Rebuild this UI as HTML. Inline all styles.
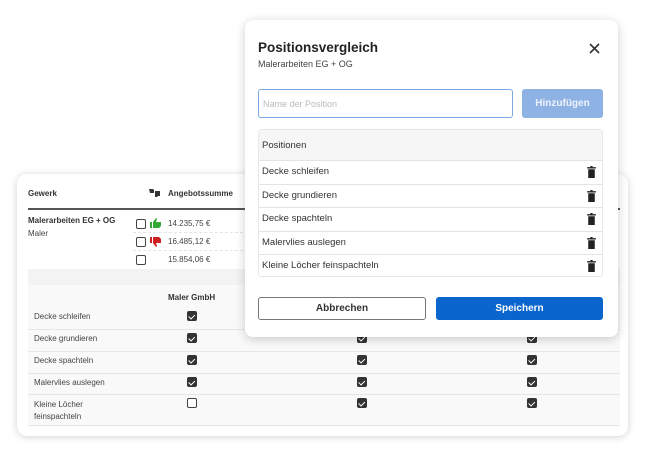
<!DOCTYPE html>
<html><head><meta charset="utf-8"><style>
*{box-sizing:border-box;margin:0;padding:0}
body{width:650px;height:450px;background:#fff;position:relative;overflow:hidden;font-family:"Liberation Sans",sans-serif;color:#333}
.abs{position:absolute}
.card{left:17px;top:174px;width:611px;height:262px;background:#fff;border-radius:10px;box-shadow:0 1px 8px rgba(0,0,0,.18)}
.t{font-size:8px;color:#444;position:absolute}
.b{font-weight:bold;color:#333}
.cb{position:absolute;width:10px;height:10px;border:1.3px solid #444;border-radius:2px;background:#fff}
.ck{position:absolute;width:10px;height:10px;border-radius:2px;background:#333}
.ck:after{content:"";position:absolute;left:3px;top:1.5px;width:2.5px;height:4.5px;border:solid #fff;border-width:0 1.3px 1.3px 0;transform:rotate(45deg)}
.modal{left:245px;top:20px;width:373px;height:317px;background:#fff;border-radius:8px;box-shadow:0 2px 10px rgba(0,0,0,.2)}
.row{position:absolute;left:258px;width:345px;height:23.5px;border-top:1px solid #e4e4e4;font-size:9.5px;color:#333;padding:5px 4px}
.trash{position:absolute;right:7px;top:5px;width:9px;height:12px}
</style></head><body>
<div class="abs card"></div>
<div class="t b" style="left:28px;top:189px">Gewerk</div>
<div class="t b" style="left:168px;top:189px">Angebotssumme</div>
<svg class="abs" style="left:149px;top:188px" width="12" height="9" viewBox="0 0 12 9"><path d="M0 1h4l1 1v3H1z M6 3h5v5H9L8 9H6z" fill="#333"/></svg>
<div class="abs" style="left:28px;top:208px;width:592px;height:1.5px;background:#555"></div>
<div class="t b" style="left:28px;top:216px">Malerarbeiten EG + OG</div>
<div class="t" style="left:28px;top:229px">Maler</div>
<div class="cb" style="left:136px;top:219px"></div>
<div class="cb" style="left:136px;top:237px"></div>
<div class="cb" style="left:136px;top:255px"></div>
<svg class="abs" style="left:150px;top:218px" width="11" height="10" viewBox="0 0 11 10"><path d="M0 4h2v6H0z M3 4l3-4 1 1-1 3h5v4l-2 2H3z" fill="#3a3"/></svg>
<svg class="abs" style="left:150px;top:237px" width="11" height="10" viewBox="0 0 11 10"><path d="M0 0h2v6H0z M3 6l3 4 1-1-1-3h5V2L9 0H3z" fill="#c22"/></svg>
<div class="t" style="left:168px;top:219px">14.235,75 €</div>
<div class="t" style="left:168px;top:237px">16.485,12 €</div>
<div class="t" style="left:168px;top:255px">15.854,06 €</div>
<div class="abs" style="left:133px;top:232px;width:110px;border-top:1px dashed #e4e4e4"></div>
<div class="abs" style="left:133px;top:250px;width:110px;border-top:1px dashed #e4e4e4"></div>
<div class="abs" style="left:28px;top:269px;width:592px;height:16px;background:#f3f3f3"></div>
<div class="abs" style="left:28px;top:285px;width:592px;height:141px;background:#f9f9f9;border-bottom:1px solid #e6e6e6"></div>
<div class="t b" style="left:168px;top:293px">Maler GmbH</div>
<div class="t" style="left:34px;top:312px">Decke schleifen</div>
<div class="t" style="left:34px;top:334px">Decke grundieren</div>
<div class="t" style="left:34px;top:356px">Decke spachteln</div>
<div class="t" style="left:34px;top:378px">Malervlies auslegen</div>
<div class="t" style="left:34px;top:399px;line-height:12px">Kleine Löcher<br>feinspachteln</div>
<div class="abs" style="left:28px;top:329px;width:592px;border-top:1px solid #e6e6e6"></div>
<div class="abs" style="left:28px;top:351px;width:592px;border-top:1px solid #e6e6e6"></div>
<div class="abs" style="left:28px;top:373px;width:592px;border-top:1px solid #e6e6e6"></div>
<div class="abs" style="left:28px;top:394px;width:592px;border-top:1px solid #e6e6e6"></div>
<div class="ck" style="left:187px;top:311px"></div>
<div class="ck" style="left:187px;top:333px"></div>
<div class="ck" style="left:187px;top:355px"></div>
<div class="ck" style="left:187px;top:377px"></div>
<div class="cb" style="left:187px;top:398px"></div>
<div class="ck" style="left:357px;top:333px"></div><div class="ck" style="left:357px;top:355px"></div><div class="ck" style="left:357px;top:377px"></div><div class="ck" style="left:357px;top:398px"></div>
<div class="ck" style="left:527px;top:333px"></div><div class="ck" style="left:527px;top:355px"></div><div class="ck" style="left:527px;top:377px"></div><div class="ck" style="left:527px;top:398px"></div>

<div class="abs modal"></div>
<div class="abs" style="left:258px;top:40px;font-size:13.5px;font-weight:bold;color:#222">Positionsvergleich</div>
<div class="abs" style="left:258px;top:59px;font-size:9px;color:#444">Malerarbeiten EG + OG</div>
<svg class="abs" style="left:589px;top:43px" width="11" height="11" viewBox="0 0 11 11"><path d="M1 1l9 9M10 1l-9 9" stroke="#333" stroke-width="1.6"/></svg>
<div class="abs" style="left:258px;top:89px;width:255px;height:29px;border:1px solid #7aa9e6;border-radius:3px;font-size:9px;color:#bbb;padding:9px 4px">Name der Position</div>
<div class="abs" style="left:522px;top:89px;width:81px;height:29px;background:#8fb2e5;border-radius:3px;font-size:10px;font-weight:bold;color:#eef3fb;text-align:center;line-height:29px">Hinzufügen</div>
<div class="abs" style="left:258px;top:129px;width:345px;height:148px;border:1px solid #e8e8e8;border-radius:3px"></div>
<div class="abs" style="left:259px;top:130px;width:343px;height:30px;background:#f6f6f6;font-size:9.5px;color:#333;padding:10px 3px">Positionen</div>
<div class="row" style="top:160px">Decke schleifen<svg class="trash" viewBox="0 0 8 11"><path d="M0 1h8v1.3H0zM3 0h2v1H3zM1 3h6v8H1z" fill="#222"/></svg></div>
<div class="row" style="top:183.5px">Decke grundieren<svg class="trash" viewBox="0 0 8 11"><path d="M0 1h8v1.3H0zM3 0h2v1H3zM1 3h6v8H1z" fill="#222"/></svg></div>
<div class="row" style="top:207px">Decke spachteln<svg class="trash" viewBox="0 0 8 11"><path d="M0 1h8v1.3H0zM3 0h2v1H3zM1 3h6v8H1z" fill="#222"/></svg></div>
<div class="row" style="top:230.5px">Malervlies auslegen<svg class="trash" viewBox="0 0 8 11"><path d="M0 1h8v1.3H0zM3 0h2v1H3zM1 3h6v8H1z" fill="#222"/></svg></div>
<div class="row" style="top:254px">Kleine Löcher feinspachteln<svg class="trash" viewBox="0 0 8 11"><path d="M0 1h8v1.3H0zM3 0h2v1H3zM1 3h6v8H1z" fill="#222"/></svg></div>
<div class="abs" style="left:258px;top:297px;width:168px;height:23px;border:1px solid #777;border-radius:3px;font-size:10px;font-weight:bold;color:#333;text-align:center;line-height:21px">Abbrechen</div>
<div class="abs" style="left:436px;top:297px;width:167px;height:23px;background:#0a66cc;border-radius:3px;font-size:10px;font-weight:bold;color:#fff;text-align:center;line-height:23px">Speichern</div>
</body></html>
